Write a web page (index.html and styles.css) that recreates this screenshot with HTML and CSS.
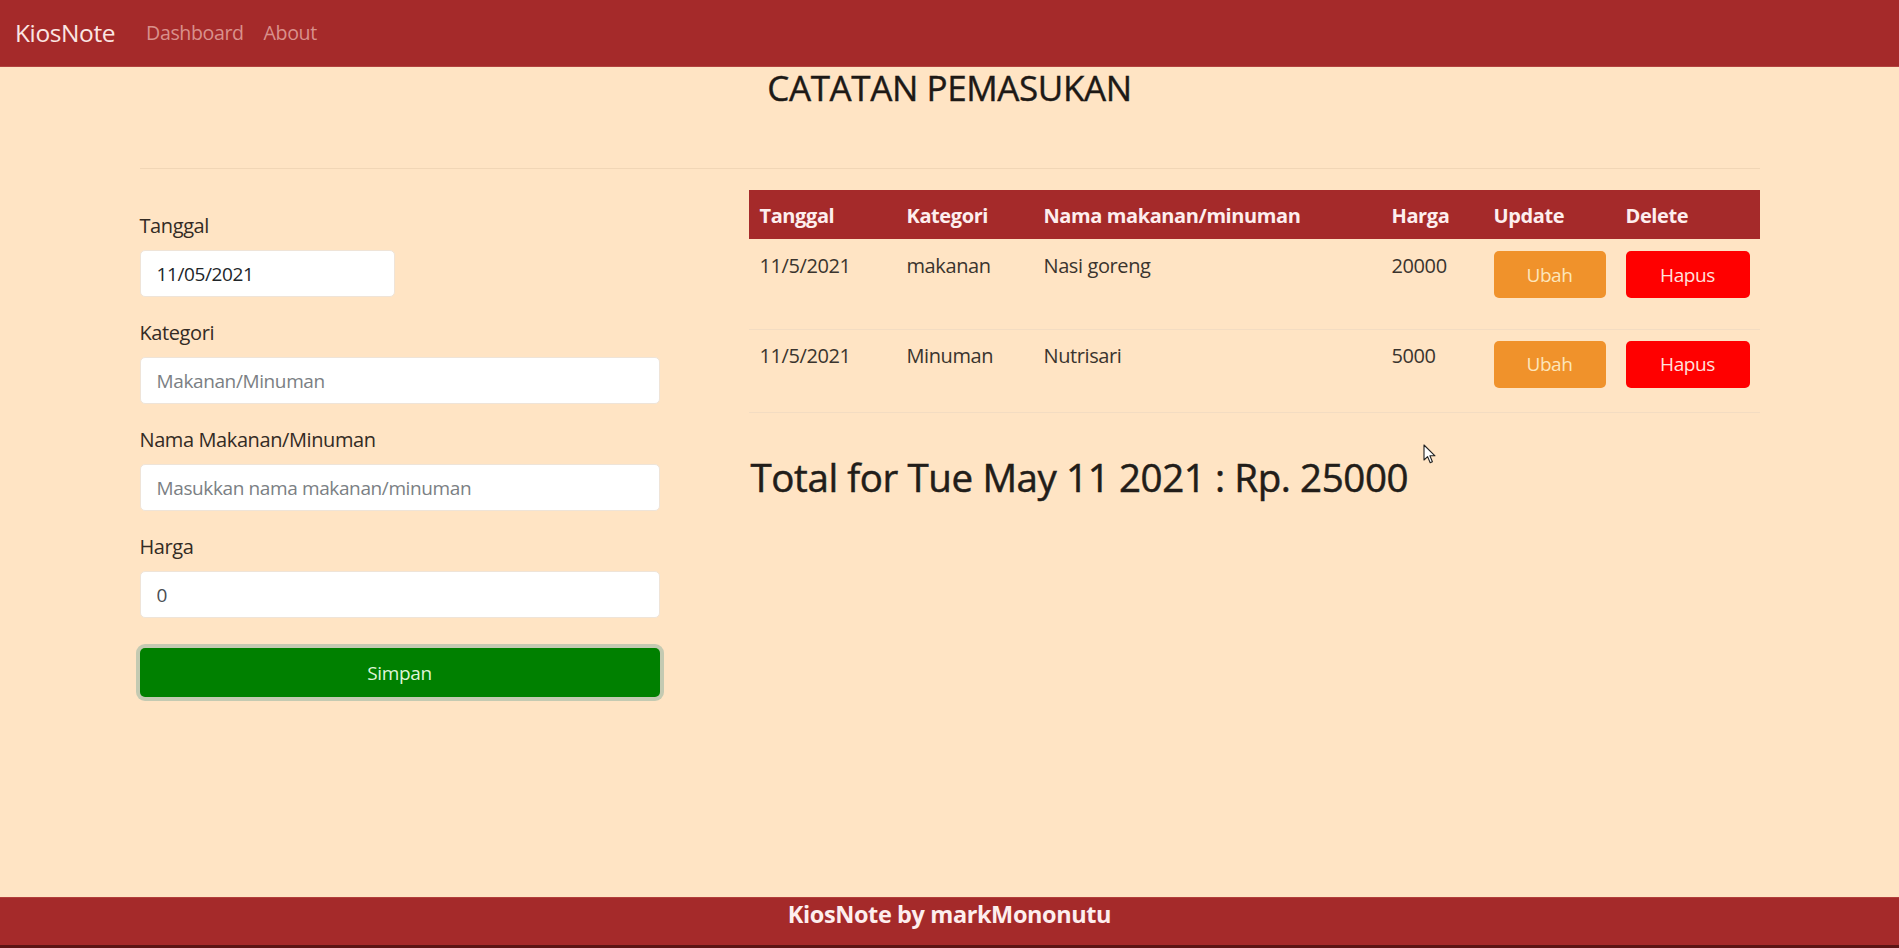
FILE: index.html
```html
<!DOCTYPE html>
<html lang="id">
<head>
<meta charset="utf-8">
<title>KiosNote</title>
<link rel="stylesheet" href="styles.css">
</head>
<body>
<nav class="navbar">
  <a class="brand" href="#">KiosNote</a>
  <ul class="nav-links">
    <li><a href="#">Dashboard</a></li>
    <li><a href="#">About</a></li>
  </ul>
</nav>

<main class="container">
  <h3 class="page-title">CATATAN PEMASUKAN</h3>
  <hr class="divider">
  <div class="content-row">
    <form class="entry-form">
      <div class="field">
        <label class="field-label">Tanggal</label>
        <input class="input input-date" type="text" value="11/05/2021">
      </div>
      <div class="field">
        <label class="field-label">Kategori</label>
        <input class="input" type="text" placeholder="Makanan/Minuman">
      </div>
      <div class="field">
        <label class="field-label">Nama Makanan/Minuman</label>
        <input class="input" type="text" placeholder="Masukkan nama makanan/minuman">
      </div>
      <div class="field">
        <label class="field-label">Harga</label>
        <input class="input input-number" type="text" value="0">
      </div>
      <button class="btn btn-save" type="button">Simpan</button>
    </form>

    <section class="records">
      <table class="record-table">
        <colgroup>
          <col class="c-date"><col class="c-cat"><col class="c-name"><col class="c-price"><col class="c-upd"><col class="c-del">
        </colgroup>
        <thead>
          <tr>
            <th>Tanggal</th>
            <th>Kategori</th>
            <th>Nama makanan/minuman</th>
            <th>Harga</th>
            <th>Update</th>
            <th>Delete</th>
          </tr>
        </thead>
        <tbody>
          <tr class="row-first">
            <td>11/5/2021</td>
            <td>makanan</td>
            <td>Nasi goreng</td>
            <td>20000</td>
            <td><button class="btn btn-edit" type="button">Ubah</button></td>
            <td><button class="btn btn-delete" type="button">Hapus</button></td>
          </tr>
          <tr class="row-second">
            <td>11/5/2021</td>
            <td>Minuman</td>
            <td>Nutrisari</td>
            <td>5000</td>
            <td><button class="btn btn-edit" type="button">Ubah</button></td>
            <td><button class="btn btn-delete" type="button">Hapus</button></td>
          </tr>
        </tbody>
      </table>
      <h2 class="total">Total for Tue May 11 2021 : Rp. 25000</h2>
    </section>
  </div>
</main>

<footer class="footer">KiosNote by markMononutu</footer>
<div class="taskbar"></div>

<svg class="cursor" width="14" height="21" viewBox="0 0 14 21" aria-hidden="true">
  <path d="M1 1 L1 16 L4.6 12.6 L7.2 18.8 L9.4 17.8 L6.9 11.8 L12 11.8 Z" fill="#fff" stroke="#222" stroke-width="1.1" stroke-linejoin="round"/>
</svg>
</body>
</html>
```

FILE: styles.css
```css
* { box-sizing: border-box; }

html, body {
  margin: 0;
  padding: 0;
}

body {
  min-height: 948px;
  display: flex;
  flex-direction: column;
  background: #ffe4c4;
  color: #212529;
  font-family: "Open Sans", "Noto Sans", sans-serif;
  font-size: 20px;
  letter-spacing: -0.02em;
  position: relative;
}

/* Navbar */
.navbar {
  height: 67px;
  background: #a52a2a;
  display: flex;
  align-items: center;
  padding-left: 15px;
  border-bottom: 1px solid #b2433f;
}

.brand {
  color: #fbe6e3;
  font-size: 24.5px;
  text-decoration: none;
  margin-right: 31px;
  line-height: 30px;
}

.nav-links {
  list-style: none;
  margin: 0;
  padding: 0;
  display: flex;
  gap: 20px;
}

.nav-links a {
  color: #d9918c;
  text-decoration: none;
  font-size: 19.6px;
  line-height: 30px;
}

/* Main */
.container {
  flex: 1;
  width: 1620px;
  margin: 0 auto;
}

.page-title {
  margin: 0;
  text-align: center;
  font-size: 35px;
  font-weight: 500;
  line-height: 42px;
  color: #1d1916;
  -webkit-text-stroke: 0.4px #1d1916;
}

.divider {
  margin: 59px 0 0;
  border: 0;
  border-top: 1px solid #f1d6b6;
  height: 0;
}

.content-row {
  display: flex;
  gap: 89px;
  margin-top: 21px;
}

/* Form */
.entry-form {
  width: 520px;
  flex: none;
  padding-top: 21px;
}

.field {
  margin-bottom: 21px;
}

.field-label {
  display: block;
  line-height: 30px;
  margin-bottom: 9px;
  color: #332b24;
}

.input {
  display: block;
  width: 100%;
  height: 47px;
  padding: 0 16px;
  border: 1px solid #efe4d8;
  border-radius: 5px;
  background: #fff;
  font-family: inherit;
  font-size: 19px;
  letter-spacing: -0.02em;
  color: #212529;
}

.input::placeholder {
  color: #7b7f84;
}

.input-date {
  width: 255px;
}

.input-number {
  color: #4a4e52;
}

.btn {
  display: block;
  border: 0;
  border-radius: 5px;
  font-family: inherit;
  font-size: 19px;
  letter-spacing: -0.02em;
  cursor: pointer;
}

.btn-save {
  width: 520px;
  height: 49px;
  margin-top: 30px;
  background: #008000;
  color: #dff5d8;
  box-shadow: 0 0 0 4px #c4cab2;
}

/* Table */
.records {
  width: 1011px;
  flex: none;
}

.record-table {
  width: 1011px;
  border-collapse: collapse;
  table-layout: fixed;
}

.c-date { width: 148px; }
.c-cat { width: 137px; }
.c-name { width: 348px; }
.c-price { width: 102px; }
.c-upd { width: 132px; }
.c-del { width: 144px; }

.record-table th {
  background: #a52a2a;
  color: #fdeeee;
  font-weight: 700;
  text-align: left;
  padding: 11px 10px 8px;
  line-height: 30px;
}

.record-table th:first-child,
.record-table td:first-child {
  padding-left: 11px;
}

.record-table td {
  vertical-align: top;
  padding: 12px 10px 0;
  line-height: 30px;
  color: #3a342e;
  border-bottom: 1px solid #f3dcc2;
}

.row-first { height: 90px; }
.row-second { height: 83px; }
.row-second td { padding-top: 11px; }

.btn-edit {
  width: 112px;
  height: 47px;
  background: #f0922b;
  color: #fde6bb;
}

.btn-delete {
  width: 124px;
  height: 47px;
  background: #ff0000;
  color: #ffe0dc;
}

.total {
  margin: 40px 0 0 2px;
  font-size: 38.5px;
  font-weight: 500;
  line-height: 48px;
  color: #221d19;
  -webkit-text-stroke: 0.5px #221d19;
}

/* Footer */
.footer {
  height: 48px;
  background: #a52a2a;
  border-top: 1px solid #b23f3b;
  color: #fdeeee;
  font-weight: 700;
  font-size: 23.5px;
  line-height: 30px;
  padding-top: 1px;
  text-align: center;
}

.taskbar {
  height: 3px;
  background: #5b1414;
}

.cursor {
  position: absolute;
  left: 1423px;
  top: 444px;
}
```
